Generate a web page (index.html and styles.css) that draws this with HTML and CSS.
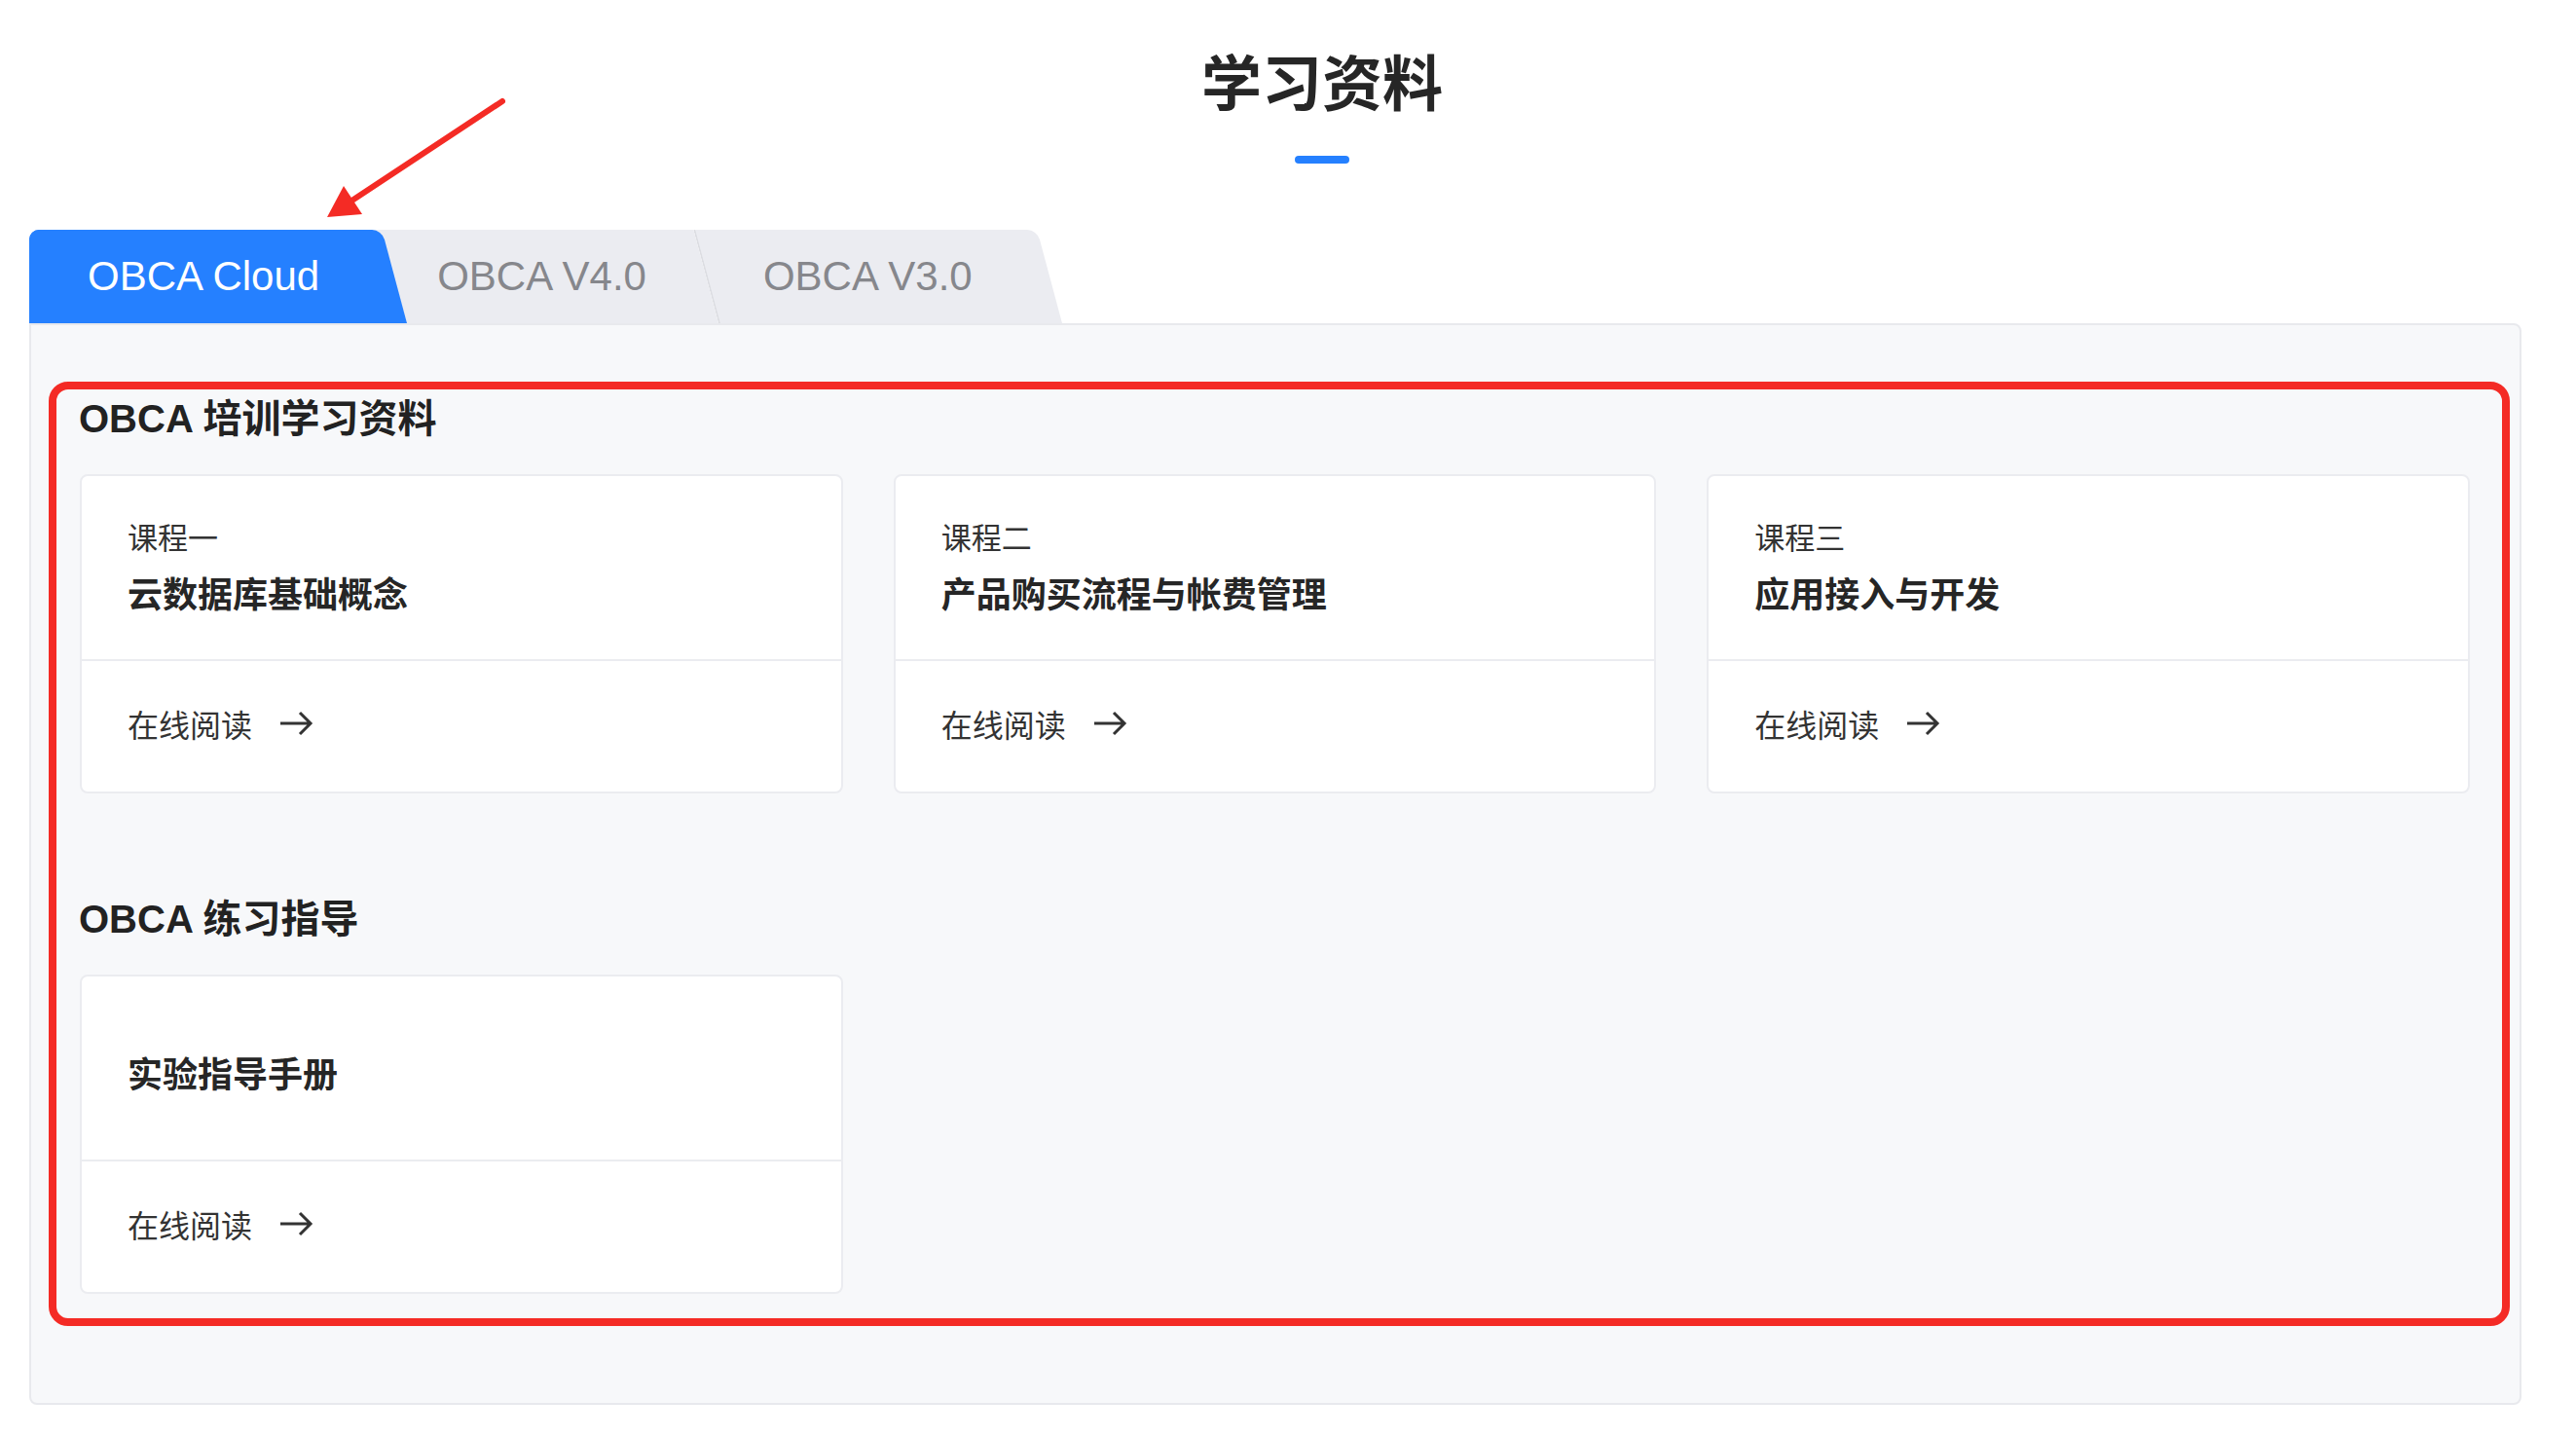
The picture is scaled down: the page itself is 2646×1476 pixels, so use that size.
FILE: index.html
```html
<!DOCTYPE html>
<html lang="zh-CN">
<head>
    <meta charset="UTF-8">
    <meta name="viewport" content="width=device-width, initial-scale=1.0">
    <title>学习资料 - OBCA</title>
    <link rel="stylesheet" href="styles.css">
</head>
<body>
    <div class="page">
        <!-- annotation arrow pointing at the active tab -->
        <svg class="annotation-arrow" width="600" height="260" viewBox="0 0 600 260">
            <line x1="516" y1="104" x2="360" y2="207" stroke="#f42b25" stroke-width="6" stroke-linecap="round"/>
            <polygon points="336,223 353,191 372,220" fill="#f42b25"/>
        </svg>

        <div class="page-title">
            <h1>学习资料</h1>
            <span class="title-bar"></span>
        </div>

        <div class="tabs">
            <div class="tab tab-cloud active">OBCA Cloud</div>
            <div class="tab tab-v4">OBCA V4.0</div>
            <div class="tab tab-v3">OBCA V3.0</div>
        </div>

        <div class="panel">
            <div class="highlight-box"></div>

            <section class="section">
                <h2>OBCA 培训学习资料</h2>
                <div class="card-grid">
                    <div class="card">
                        <div class="card-body">
                            <div class="card-label">课程一</div>
                            <div class="card-title">云数据库基础概念</div>
                        </div>
                        <div class="card-footer">
                            <span>在线阅读</span>
                            <svg class="arrow" width="36" height="28" viewBox="0 0 36 28"><path d="M2 14H33M22 3L33 14L22 25" fill="none" stroke="#333" stroke-width="3"/></svg>
                        </div>
                    </div>
                    <div class="card">
                        <div class="card-body">
                            <div class="card-label">课程二</div>
                            <div class="card-title">产品购买流程与帐费管理</div>
                        </div>
                        <div class="card-footer">
                            <span>在线阅读</span>
                            <svg class="arrow" width="36" height="28" viewBox="0 0 36 28"><path d="M2 14H33M22 3L33 14L22 25" fill="none" stroke="#333" stroke-width="3"/></svg>
                        </div>
                    </div>
                    <div class="card">
                        <div class="card-body">
                            <div class="card-label">课程三</div>
                            <div class="card-title">应用接入与开发</div>
                        </div>
                        <div class="card-footer">
                            <span>在线阅读</span>
                            <svg class="arrow" width="36" height="28" viewBox="0 0 36 28"><path d="M2 14H33M22 3L33 14L22 25" fill="none" stroke="#333" stroke-width="3"/></svg>
                        </div>
                    </div>
                </div>
            </section>

            <section class="section">
                <h2>OBCA 练习指导</h2>
                <div class="card-grid">
                    <div class="card">
                        <div class="card-body">
                            <div class="card-label"></div>
                            <div class="card-title">实验指导手册</div>
                        </div>
                        <div class="card-footer">
                            <span>在线阅读</span>
                            <svg class="arrow" width="36" height="28" viewBox="0 0 36 28"><path d="M2 14H33M22 3L33 14L22 25" fill="none" stroke="#333" stroke-width="3"/></svg>
                        </div>
                    </div>
                </div>
            </section>
        </div>
    </div>
</body>
</html>
```

FILE: styles.css
```css
* {
    margin: 0;
    padding: 0;
    box-sizing: border-box;
    font-family: 'Liberation Sans', 'Noto Sans CJK SC', sans-serif;
}

body {
    background: #fff;
    color: #262626;
}

.page {
    position: relative;
    min-height: 100vh;
}

.annotation-arrow {
    position: absolute;
    left: 0;
    top: 0;
    z-index: 5;
    pointer-events: none;
}

/* Title */
.page-title {
    padding-top: 48px;
    padding-left: 70px;
    text-align: center;
}

.page-title h1 {
    font-size: 62px;
    line-height: 80px;
    font-weight: bold;
    color: #262626;
}

.title-bar {
    display: block;
    width: 56px;
    height: 8px;
    margin: 32px auto 0;
    border-radius: 4px;
    background: #2580ff;
}

/* Tabs */
.tabs {
    display: flex;
    margin: 68px 56px 0 30px;
    height: 96px;
}

.tab {
    position: relative;
    z-index: 0;
    height: 96px;
    line-height: 96px;
    font-size: 42px;
    color: #86878c;
    white-space: nowrap;
    cursor: pointer;
}

.tab::before {
    content: '';
    position: absolute;
    top: 0;
    bottom: 0;
    left: -16px;
    right: 0;
    z-index: -1;
    background: #ebecf1;
    transform: skewX(15deg);
    transform-origin: bottom left;
}

.tab.active {
    z-index: 1;
    color: #fff;
    overflow: hidden;
    border-top-left-radius: 10px;
}

.tab.active::before {
    left: 0;
    background: #2580ff;
    border-top-right-radius: 10px;
}

.tab.active::after {
    content: '';
    position: absolute;
    top: 0;
    bottom: 0;
    left: 0;
    width: 50%;
    z-index: -1;
    background: #2580ff;
}

.tab-v3::before {
    left: 0;
    border-left: 2px solid #dcdde2;
    border-top-right-radius: 10px;
}

.tab-cloud { padding: 0 90px 0 60px; }
.tab-v4 { padding: 0 74px 0 31px; }
.tab-v3 { padding: 0 92px 0 46px; }

/* Panel */
.panel {
    position: relative;
    margin: 0 56px 34px 30px;
    padding: 68px 51px 112px 50px;
    background: #f7f8fa;
    border: 2px solid #e8e9ed;
    border-radius: 0 8px 8px 8px;
}

.highlight-box {
    position: absolute;
    left: 18px;
    top: 58px;
    right: 10px;
    bottom: 79px;
    border: 8px solid #f42b25;
    border-radius: 20px;
    pointer-events: none;
}

.section + .section {
    margin-top: 101px;
}

.section h2 {
    font-size: 40px;
    line-height: 56px;
    font-weight: bold;
    color: #222;
    margin-bottom: 29px;
    margin-left: -1px;
}

.card-grid {
    display: grid;
    grid-template-columns: repeat(3, 1fr);
    gap: 52px;
}

.card {
    background: #fff;
    border: 2px solid #ebecf0;
    border-radius: 8px;
    overflow: hidden;
}

.card-body {
    height: 190px;
    padding: 0 47px;
    border-bottom: 2px solid #ebecf0;
    display: flex;
    flex-direction: column;
    justify-content: center;
}

.card-label {
    font-size: 31px;
    line-height: 40px;
    color: #333;
    margin-bottom: 15px;
    margin-top: 3px;
}

.card-label:empty {
    margin-top: 0;
}

.card-title {
    font-size: 36px;
    line-height: 46px;
    font-weight: bold;
    color: #262626;
}

.card-footer {
    height: 134px;
    padding: 0 47px 6px;
    display: flex;
    align-items: center;
    gap: 27px;
    font-size: 32px;
    color: #333;
    cursor: pointer;
}

.card-footer .arrow {
    flex-shrink: 0;
}
```
